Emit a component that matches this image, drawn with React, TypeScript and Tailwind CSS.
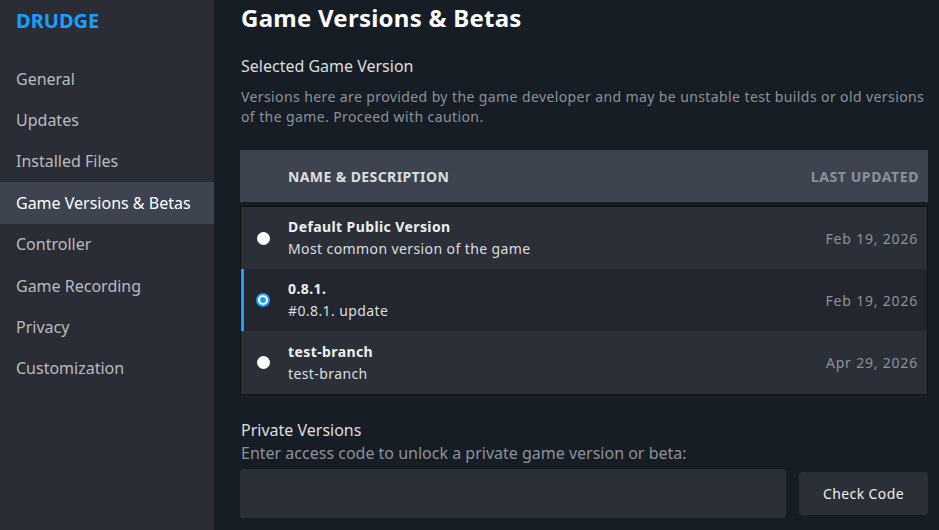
import { useState } from "react";

type Branch = { id: string; name: string; desc: string; date: string };

const navItems = [
  "General",
  "Updates",
  "Installed Files",
  "Game Versions & Betas",
  "Controller",
  "Game Recording",
  "Privacy",
  "Customization",
];

const branches: Branch[] = [
  { id: "public", name: "Default Public Version", desc: "Most common version of the game", date: "Feb 19, 2026" },
  { id: "081", name: "0.8.1.", desc: "#0.8.1. update", date: "Feb 19, 2026" },
  { id: "test", name: "test-branch", desc: "test-branch", date: "Apr 29, 2026" },
];

const App = () => {
  const [selected, setSelected] = useState("081");

  return (
    <div
      className="flex h-[530px] w-full overflow-hidden bg-[#171d25] text-[#dcdedf]"
      style={{ fontFamily: '"Noto Sans", "Open Sans", sans-serif' }}
    >
      {/* Sidebar */}
      <aside className="w-[214px] shrink-0 bg-[#2a2d35]">
        <div className="px-4 pt-[6px] h-[58px] text-[20px] font-bold text-[#1a9fff]">DRUDGE</div>
        <nav className="flex flex-col">
          {navItems.map((item) => (
            <div
              key={item}
              className={
                item === "Game Versions & Betas"
                  ? "h-[41.4px] px-4 flex items-center text-[16px] bg-[#3d4450] text-white"
                  : "h-[41.4px] px-4 flex items-center text-[16px] text-[#b8bcbf]"
              }
            >
              {item}
            </div>
          ))}
        </nav>
      </aside>

      {/* Content */}
      <main className="flex-1 pl-[27px] pr-[11px] -mt-[1px]">
        <h1 className="text-[24px] font-bold text-white leading-[38px] tracking-[0.25px]">Game Versions &amp; Betas</h1>
        <h2 className="mt-[18px] text-[16px] leading-[22px] text-[#dcdedf]">Selected Game Version</h2>
        <p className="mt-[10px] text-[14px] leading-[20px] tracking-[0.4px] text-[#8b929a]">
          Versions here are provided by the game developer and may be unstable test builds or old versions of the game. Proceed with caution.
        </p>

        <div className="mt-[23px] ml-[-1px]">
          <div className="h-[52px] bg-[#3d4450] flex items-center pl-[48px] pr-[9px] text-[14px] font-bold uppercase tracking-[0.4px]">
            <span className="flex-1 text-[#dcdedf]">Name &amp; Description</span>
            <span className="text-[#8b929a] tracking-[0.6px]">Last Updated</span>
          </div>
          <div className="mt-[4px] border border-[#0e1217]">
            {branches.map((b, i) => {
              const isSel = b.id === selected;
              return (
                <div
                  key={b.id}
                  onClick={() => setSelected(b.id)}
                  className={
                    i === 2
                      ? "relative h-[63px] flex items-center cursor-pointer " + (isSel ? "bg-[#23262e]" : "bg-[#2b2f38]")
                      : "relative h-[62px] flex items-center cursor-pointer " + (isSel ? "bg-[#23262e]" : "bg-[#2b2f38]")
                  }
                >
                  {isSel && <div className="absolute left-0 top-0 bottom-0 w-[3px] bg-[#1a9fff]" />}
                  <div className="w-[44px] flex justify-center">
                    {isSel ? (
                      <div className="w-[14px] h-[14px] rounded-full bg-[#1a9fff] flex items-center justify-center">
                        <div className="w-[10px] h-[10px] rounded-full border-[2px] border-white bg-[#1a9fff]" />
                      </div>
                    ) : (
                      <div className="w-[13px] h-[13px] rounded-full bg-white" />
                    )}
                  </div>
                  <div className="ml-[3px] flex-1 flex flex-col tracking-[0.4px]">
                    <span className="text-[14px] font-bold leading-[22px] text-[#eef0f1]">{b.name}</span>
                    <span className="text-[14px] leading-[22px] text-[#dcdedf]">{b.desc}</span>
                  </div>
                  <span className="pr-[9px] text-[14px] tracking-[0.8px] text-[#8b929a]">{b.date}</span>
                </div>
              );
            })}
          </div>
        </div>

        <h2 className="mt-[24px] text-[16px] leading-[22px] text-[#dcdedf]">Private Versions</h2>
        <p className="text-[16px] leading-[24px] text-[#8b929a]">Enter access code to unlock a private game version or beta:</p>
        <div className="mt-[4px] flex items-center gap-[13px]">
          <input
            className="ml-[-1px] flex-1 h-[49px] rounded-[3px] bg-[#2b2f38] outline-none px-3 text-[14px] text-white"
            type="text"
          />
          <button className="w-[129px] h-[43px] rounded-[3px] bg-[#2b2f38] text-[14px] tracking-[0.4px] text-[#eef0f1]">
            Check Code
          </button>
        </div>
      </main>
    </div>
  );
};

export default App;
